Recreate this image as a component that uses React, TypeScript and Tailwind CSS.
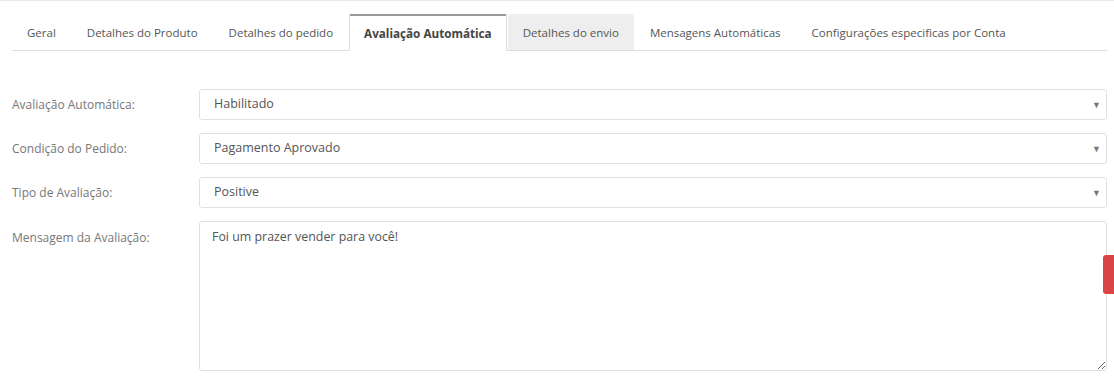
import * as React from 'react';

const tabs = [
  'Geral',
  'Detalhes do Produto',
  'Detalhes do pedido',
  'Avaliação Automática',
  'Detalhes do envio',
  'Mensagens Automáticas',
  'Configurações especificas por Conta',
];

const ACTIVE = 3;
const HOVER = 4;

type SelectRowProps = {
  label: string;
  value: string;
};

const SelectRow = ({ label, value }: SelectRowProps) => (
  <div className="flex items-center">
    <label className="w-[187px] shrink-0 text-[12px] text-[#777]">{label}</label>
    <div className="relative flex-1 h-[31px] border border-[#e0e0e0] rounded-[3px] bg-white flex items-center pl-[14px]">
      <span className="text-[12.5px] text-[#555]">{value}</span>
      <span className="absolute right-[5px] top-[10px] text-[#777] text-[9px] leading-none">▼</span>
    </div>
  </div>
);

export default function App() {
  return (
    <div
      className="relative w-[1114px] h-[383px] bg-white overflow-hidden border-t border-[#e6e9f0]"
      style={{ fontFamily: '"Open Sans", "Liberation Sans", sans-serif' }}
    >
      <div className="pt-[13px] pl-[12px] pr-[7px]">
        {/* tabs */}
        <div className="flex border-b border-[#ddd] h-[37px]">
          {tabs.map((t, i) => (
            <div
              key={t}
              className={
                i === ACTIVE
                  ? 'h-[37px] -mb-px px-[14px] mr-[1px] pt-[2px] flex items-center whitespace-nowrap bg-white border border-[#ddd] border-t-2 border-t-[#999] border-b-white rounded-t-[2px] text-[11.7px] font-bold text-[#444]'
                  : i === HOVER
                  ? 'h-[36px] px-[15px] mr-[1px] pt-[2px] flex items-center whitespace-nowrap bg-[#eee] rounded-t-[3px] text-[11.5px] text-[#555]'
                  : 'h-[36px] px-[15px] mr-[1px] pt-[2px] flex items-center whitespace-nowrap text-[11.5px] text-[#555]'
              }
            >
              {t}
            </div>
          ))}
        </div>

        {/* form */}
        <div className="mt-[38px] flex flex-col gap-[13px]">
          <SelectRow label="Avaliação Automática:" value="Habilitado" />
          <SelectRow label="Condição do Pedido:" value="Pagamento Aprovado" />
          <SelectRow label="Tipo de Avaliação:" value="Positive" />
          <div className="flex items-start">
            <label className="w-[187px] shrink-0 text-[12px] text-[#777] pt-[8px]">Mensagem da Avaliação:</label>
            <textarea
              className="flex-1 h-[150px] border border-[#e0e0e0] rounded-[3px] px-[12px] py-[6px] text-[12.4px] text-[#555] outline-none"
              style={{ fontFamily: '"Open Sans", "Liberation Sans", sans-serif' }}
              defaultValue="Foi um prazer vender para você!"
            />
          </div>
        </div>
      </div>

      {/* feedback widget */}
      <div className="absolute right-0 top-[254px] w-[11px] h-[39px] bg-[#d94545] rounded-l-[3px]" />
    </div>
  );
}
